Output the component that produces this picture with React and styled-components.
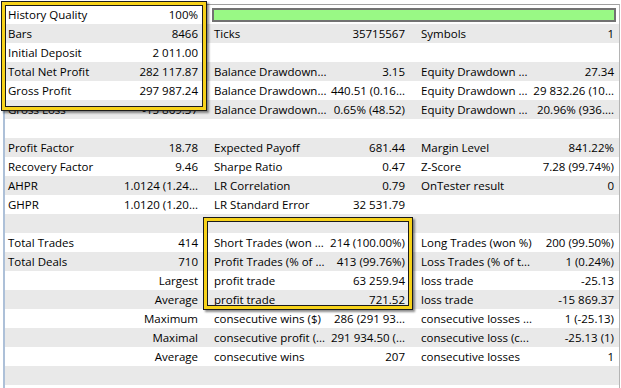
import styled, { createGlobalStyle } from 'styled-components';

const GlobalStyle = createGlobalStyle`
  html, body {
    margin: 0;
    background: #ffffff;
  }
`;

const Page = styled.div`
  position: relative;
  width: 621px;
  height: 388px;
  overflow: hidden;
  font-family: 'Open Sans', 'Noto Sans', sans-serif;
  font-size: 11.5px;
  color: #000000;
`;

const Report = styled.div`
  margin: 4px 0 0 3px;
  width: 614px;
  border-top: 1px solid #a0a0a0;
  border-left: 2px solid #adc0d8;
  border-right: 1px solid #b4b4b4;
`;

const Row = styled.div`
  display: grid;
  grid-template-columns: 113px 90px 116px 91px 117px 87px;
  height: 19px;
  line-height: 19px;
  background: ${({ $shaded }) => ($shaded ? '#e9e9e9' : '#ffffff')};
`;

/* labels may spill into the empty left side of the right-aligned value */
const Label = styled.div`
  padding-left: 6px;
  white-space: nowrap;
  overflow: visible;

  &:first-child {
    padding-left: 3px;
  }
`;

const Value = styled.div`
  padding-right: 10px;
  text-align: right;
  white-space: nowrap;
  overflow: hidden;

  &:last-child {
    padding-right: 5px;
  }
`;

const BarCell = styled.div`
  grid-column: 3 / span 4;
  display: flex;
  align-items: center;
  padding: 0 3px 0 4px;
`;

const QualityBar = styled.div`
  flex: 1;
  height: 10px;
  background: #99f985;
  border: 2px solid #727272;
`;

const Highlight = styled.div`
  position: absolute;
  left: ${({ $x }) => $x}px;
  top: ${({ $y }) => $y}px;
  width: ${({ $w }) => $w}px;
  height: ${({ $h }) => $h}px;
  box-sizing: border-box;
  border: 1px solid #1b1b1b;
  box-shadow: inset 0 0 0 3px #f7d21a, inset 0 0 0 4px #1b1b1b,
    2px 2px 2px rgba(0, 0, 0, 0.45);
  pointer-events: none;
`;

const rows = [
  ['History Quality', '100%', null],
  ['Bars', '8466', 'Ticks', '35715567', 'Symbols', '1'],
  ['Initial Deposit', '2 011.00', '', '', '', ''],
  ['Total Net Profit', '282 117.87', 'Balance Drawdown...', '3.15', 'Equity Drawdown ...', '27.34'],
  ['Gross Profit', '297 987.24', 'Balance Drawdown...', '440.51 (0.16...', 'Equity Drawdown ...', '29 832.26 (10...'],
  ['Gross Loss', '-15 869.37', 'Balance Drawdown...', '0.65% (48.52)', 'Equity Drawdown ...', '20.96% (936....'],
  ['', '', '', '', '', ''],
  ['Profit Factor', '18.78', 'Expected Payoff', '681.44', 'Margin Level', '841.22%'],
  ['Recovery Factor', '9.46', 'Sharpe Ratio', '0.47', 'Z-Score', '7.28 (99.74%)'],
  ['AHPR', '1.0124 (1.24...', 'LR Correlation', '0.79', 'OnTester result', '0'],
  ['GHPR', '1.0120 (1.20...', 'LR Standard Error', '32 531.79', '', ''],
  ['', '', '', '', '', ''],
  ['Total Trades', '414', 'Short Trades (won ...', '214 (100.00%)', 'Long Trades (won %)', '200 (99.50%)'],
  ['Total Deals', '710', 'Profit Trades (% of ...', '413 (99.76%)', 'Loss Trades (% of t...', '1 (0.24%)'],
  ['', 'Largest', 'profit trade', '63 259.94', 'loss trade', '-25.13'],
  ['', 'Average', 'profit trade', '721.52', 'loss trade', '-15 869.37'],
  ['', 'Maximum', 'consecutive wins ($)', '286 (291 93...', 'consecutive losses ...', '1 (-25.13)'],
  ['', 'Maximal', 'consecutive profit (...', '291 934.50 (...', 'consecutive loss (c...', '-25.13 (1)'],
  ['', 'Average', 'consecutive wins', '207', 'consecutive losses', '1'],
  ['', '', '', '', '', ''],
  ['', '', '', '', '', ''],
];

function ReportRow({ cells, shaded }) {
  const [l1, v1, l2, v2, l3, v3] = cells;
  return (
    <Row $shaded={shaded}>
      <Label>{l1}</Label>
      <Value>{v1}</Value>
      {l2 === null ? (
        <BarCell>
          <QualityBar />
        </BarCell>
      ) : (
        <>
          <Label>{l2}</Label>
          <Value>{v2}</Value>
          <Label>{l3}</Label>
          <Value>{v3}</Value>
        </>
      )}
    </Row>
  );
}

export default function App() {
  return (
    <>
      <GlobalStyle />
      <Page>
        <Report>
          {rows.map((cells, i) => (
            <ReportRow key={i} cells={cells} shaded={i % 2 === 1} />
          ))}
        </Report>
        <Highlight $x={1} $y={1} $w={206} $h={110} />
        <Highlight $x={203} $y={217} $w={210} $h={93} />
      </Page>
    </>
  );
}
